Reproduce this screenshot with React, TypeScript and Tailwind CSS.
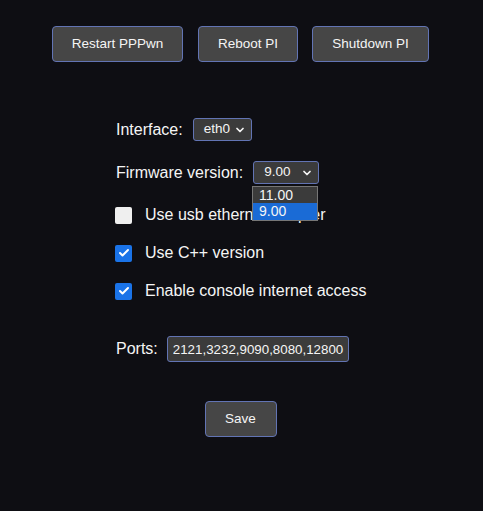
import { ChevronDown, Check } from 'lucide-react';

const font = { fontFamily: '"Liberation Sans", Arial, sans-serif' };

function ActionButton({ label, width }: { label: string; width: string }) {
  return (
    <button
      type="button"
      className={`${width} h-9 rounded-[4px] border border-[#6274b4] bg-[#464646] text-[13.5px] text-[#f5f5f5]`}
    >
      {label}
    </button>
  );
}

function FakeSelect({ value, width }: { value: string; width: string }) {
  return (
    <div
      className={`${width} h-[23px] flex items-center justify-between pl-[10px] pr-[5px] rounded-[3px] border border-[#6274b4] bg-[#3b3b3b] text-[13.5px] text-[#f5f5f5]`}
    >
      <span>{value}</span>
      <ChevronDown size={12} strokeWidth={3.5} className="text-[#f5f5f5]" />
    </div>
  );
}

function CheckRow({ label, checked }: { label: string; checked: boolean }) {
  return (
    <div className="h-6 flex items-center gap-[13px] whitespace-nowrap">
      {checked ? (
        <div className="w-[17px] h-[17px] ml-[-1px] shrink-0 rounded-[2px] bg-[#1a73e8] flex items-center justify-center">
          <Check size={12} strokeWidth={4} className="text-white" />
        </div>
      ) : (
        <div className="w-[17px] h-[17px] ml-[-1px] shrink-0 rounded-[2px] bg-[#efefef]" />
      )}
      <span className="text-[16px] text-[#f5f5f5]">{label}</span>
    </div>
  );
}

export default function App() {
  return (
    <div style={font} className="w-[483px] h-[511px] bg-[#0e0e13] overflow-hidden">
      <div className="pt-[26px] pl-[52px] flex">
        <ActionButton label="Restart PPPwn" width="w-[131px]" />
        <div className="ml-[15px]">
          <ActionButton label="Reboot PI" width="w-[100px]" />
        </div>
        <div className="ml-[14px]">
          <ActionButton label="Shutdown PI" width="w-[117px]" />
        </div>
      </div>

      <div className="mt-[56px] ml-[116px] w-[249px] flex flex-col">
        <div className="h-[23px] flex items-center gap-[10px]">
          <span className="text-[16px] text-[#f5f5f5]">Interface:</span>
          <FakeSelect value="eth0" width="w-[59px]" />
        </div>

        <div className="relative mt-[20px] h-[23px] flex items-center gap-[10px]">
          <span className="text-[16px] text-[#f5f5f5]">Firmware version:</span>
          <FakeSelect value="9.00" width="w-[66px]" />
          <div className="absolute left-[136px] top-[25px] z-10 w-[66px] border border-[#767676] bg-[#3b3b3b] text-[14px] text-[#f5f5f5] leading-[16px]">
            <div className="px-[6px] h-[16px]">11.00</div>
            <div className="px-[6px] h-[17px] bg-[#1a6bd6]">9.00</div>
          </div>
        </div>

        <div className="mt-[19px] flex flex-col gap-[14px]">
          <CheckRow label="Use usb ethernet adapter" checked={false} />
          <CheckRow label="Use C++ version" checked />
          <CheckRow label="Enable console internet access" checked />
        </div>

        <div className="mt-[33px] h-[26px] flex items-center gap-[9px]">
          <span className="text-[16px] text-[#f5f5f5]">Ports:</span>
          <input
            readOnly
            value="2121,3232,9090,8080,12800"
            style={font}
            className="w-[182px] h-[26px] pl-[5px] pr-[2px] rounded-[3px] border border-[#6274b4] bg-[#3b3b3b] text-[13.33px] text-[#f5f5f5] outline-none"
          />
        </div>

        <div className="mt-[39px] flex justify-center">
          <button
            type="button"
            className="h-9 w-[72px] rounded-[4px] border border-[#6274b4] bg-[#464646] text-[13.5px] text-[#f5f5f5]"
          >
            Save
          </button>
        </div>
      </div>
    </div>
  );
}
